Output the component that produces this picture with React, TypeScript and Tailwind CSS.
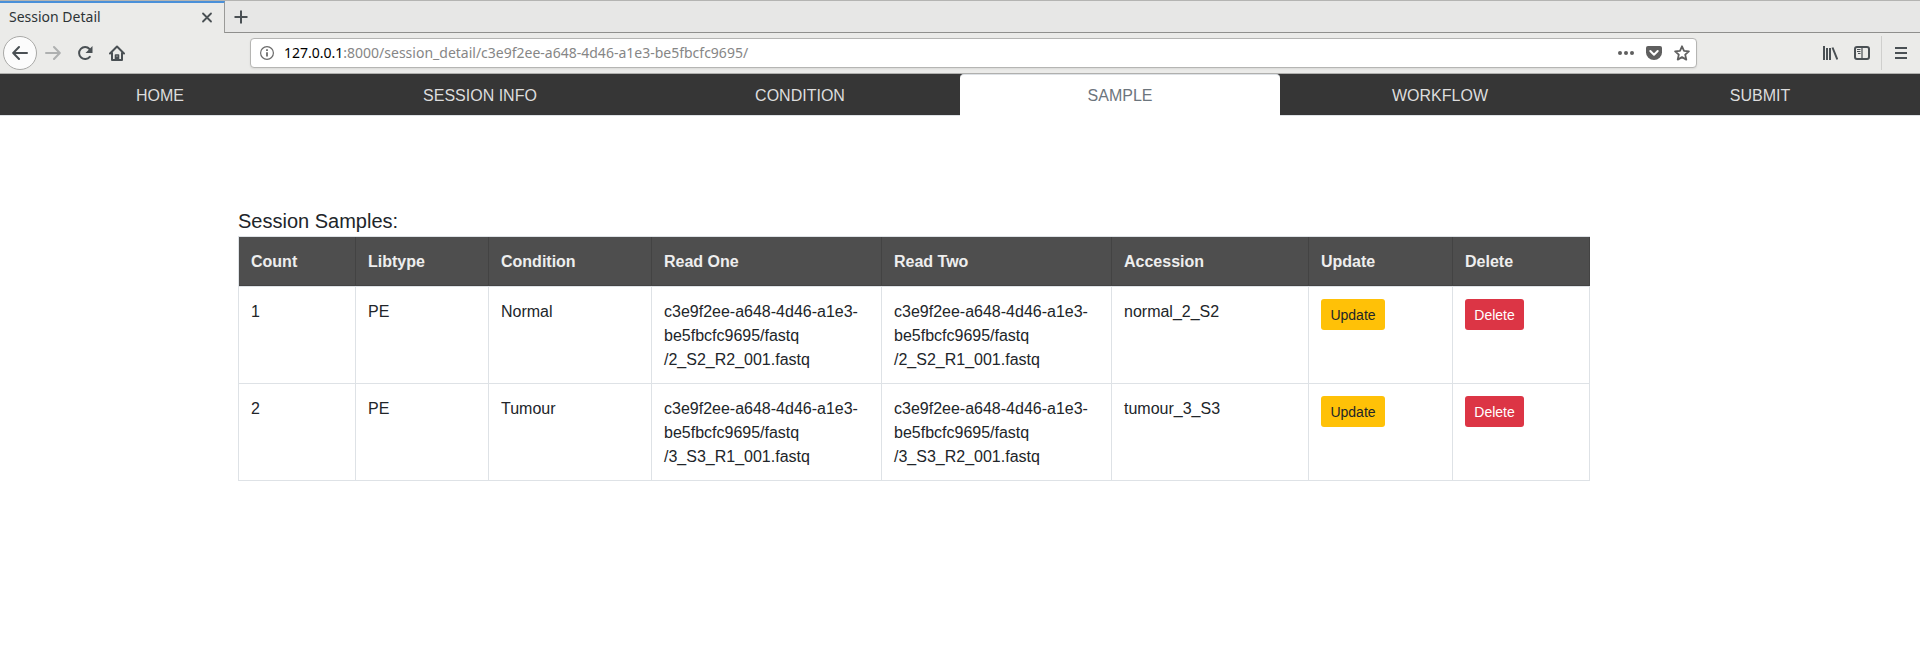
import type { ReactNode } from "react";

const navItems = ["HOME", "SESSION INFO", "CONDITION", "SAMPLE", "WORKFLOW", "SUBMIT"];
const activeItem = "SAMPLE";

const columns = [
  { label: "Count", width: "w-[117px]" },
  { label: "Libtype", width: "w-[133px]" },
  { label: "Condition", width: "w-[163px]" },
  { label: "Read One", width: "w-[230px]" },
  { label: "Read Two", width: "w-[230px]" },
  { label: "Accession", width: "w-[197px]" },
  { label: "Update", width: "w-[144px]" },
  { label: "Delete", width: "w-[137px]" },
];

const folder = ["c3e9f2ee-a648-4d46-a1e3-", "be5fbcfc9695/fastq"];

const samples = [
  { count: 1, libtype: "PE", condition: "Normal", readOne: "/2_S2_R2_001.fastq", readTwo: "/2_S2_R1_001.fastq", accession: "normal_2_S2" },
  { count: 2, libtype: "PE", condition: "Tumour", readOne: "/3_S3_R1_001.fastq", readTwo: "/3_S3_R2_001.fastq", accession: "tumour_3_S3" },
];

function ToolButton({ label, children }: { label: string; children: ReactNode }) {
  return (
    <button type="button" aria-label={label} className="flex h-8 w-8 shrink-0 items-center justify-center">
      {children}
    </button>
  );
}

function Icon({ children, className = "text-[#4a5054]" }: { children: ReactNode; className?: string }) {
  return (
    <svg
      viewBox="0 0 16 16"
      width="16"
      height="16"
      fill="none"
      stroke="currentColor"
      strokeWidth="2"
      strokeLinecap="round"
      strokeLinejoin="round"
      className={className}
      aria-hidden="true"
    >
      {children}
    </svg>
  );
}

function TabStrip() {
  return (
    <div className="flex h-[33px] border-t border-[#b4b4b2]">
      <div className="flex w-[225px] items-center justify-between border-t-2 border-r border-t-[#4a90d9] border-r-[#9a9a98] pr-[9px] pb-[3px] pl-[9px]">
        <span className="text-sm leading-5 text-[#2e3436]">Session Detail</span>
        <button type="button" aria-label="Close tab" className="flex h-4 w-4 items-center justify-center">
          <Icon>
            <path d="M4 4.500l8 8M12 4.500l-8 8" strokeWidth="1.800" />
          </Icon>
        </button>
      </div>
      <div className="flex flex-1 items-center border-b border-[#8f8f8d] bg-[#e7e7e6]">
        <button type="button" aria-label="New tab" className="flex h-8 w-8 items-center justify-center">
          <Icon>
            <path d="M8 1.500v13M1.500 8h13" strokeLinecap="butt" />
          </Icon>
        </button>
      </div>
    </div>
  );
}

function Toolbar() {
  return (
    <div className="flex h-[41px] items-center border-b border-[#b0b0ae] px-[3px]">
      <button
        type="button"
        aria-label="Back"
        className="flex h-[34px] w-[34px] shrink-0 items-center justify-center rounded-full border border-[#a9a9a7] bg-[#fcfcfc]"
      >
        <Icon>
          <path d="M15 8H1.5M7 2L1.2 8L7 14" />
        </Icon>
      </button>
      <ToolButton label="Forward">
        <Icon className="text-[#aeb0b0]">
          <path d="M1 8h13.500M9 2l5.800 6L9 14" />
        </Icon>
      </ToolButton>
      <ToolButton label="Reload">
        <Icon>
          <path d="M12.800 11.800A6 6 0 1 1 12.500 4" />
          <path d="M15.500 1v7H8.500z" fill="currentColor" stroke="none" />
        </Icon>
      </ToolButton>
      <ToolButton label="Home">
        <Icon>
          <path d="M1 8.500L8 1.500l7 7" />
          <path d="M3 8v7h10V8" />
          <path d="M6.500 15v-5h3v5M8 12v3" strokeWidth="1.600" />
        </Icon>
      </ToolButton>
      <div className="mx-[117px] flex h-[30px] min-w-0 flex-1 items-center rounded-[4px] border border-[#b5b5b3] bg-white pr-[6px] pl-[9px] text-sm leading-5 shadow-[0_1px_2px_#00000014]">
        <svg viewBox="0 0 14 14" width="14" height="14" fill="none" stroke="#6b6b6b" className="mr-[10px] shrink-0" aria-hidden="true">
          <circle cx="7" cy="7" r="6.400" strokeWidth="1.200" />
          <path d="M7 6.300v4.200M7 3.300v1.700" strokeWidth="1.800" />
        </svg>
        <label htmlFor="address" className="text-black">127.0.0.1</label>
        <input
          id="address"
          type="text"
          readOnly
          value=":8000/session_detail/c3e9f2ee-a648-4d46-a1e3-be5fbcfc9695/"
          className="min-w-0 flex-1 bg-transparent text-[#868686] outline-none"
        />
        <div className="flex items-center gap-3">
          <button type="button" aria-label="Page actions">
            <Icon className="text-[#5f5f5f]">
              <g fill="currentColor" stroke="none">
                <circle cx="2" cy="8" r="2" />
                <circle cx="8" cy="8" r="2" />
                <circle cx="14" cy="8" r="2" />
              </g>
            </Icon>
          </button>
          <button type="button" aria-label="Save to Pocket">
            <Icon className="text-[#5f5f5f]">
              <path d="M2 1h12a2 2 0 0 1 2 2v4.500a8 7.500 0 0 1-16 0V3a2 2 0 0 1 2-2z" fill="currentColor" stroke="none" />
              <path d="M4.300 6l3.700 3.700L11.700 6" stroke="#fff" />
            </Icon>
          </button>
          <button type="button" aria-label="Bookmark this page">
            <Icon className="text-[#5f5f5f]">
              <path d="M8 1.300l2 4.500 4.900.5-3.700 3.300 1.100 5L8 12.100l-4.300 2.500 1.100-5L1.100 6.300 6 5.800z" strokeWidth="1.800" />
            </Icon>
          </button>
        </div>
      </div>
      <ToolButton label="Library">
        <Icon>
          <path d="M2 1v14M5 3v12M8 3v12M10.500 2.500L15.300 14.500" strokeLinecap="butt" />
        </Icon>
      </ToolButton>
      <ToolButton label="Sidebars">
        <Icon>
          <rect x="1" y="2" width="14" height="12" rx="2" />
          <path d="M8 2v12" strokeWidth="1.200" />
          <path d="M3 4.500h3.500M3 6.500h3.500M4 8.500h2.500" strokeWidth="1" strokeLinecap="butt" />
        </Icon>
      </ToolButton>
      <div className="mx-[3px] h-[34px] w-px bg-[#cfcfcd]" />
      <ToolButton label="Open menu">
        <Icon>
          <path d="M2 3h12M2 8h12M2 13h12" strokeLinecap="butt" />
        </Icon>
      </ToolButton>
    </div>
  );
}

function SiteNav() {
  return (
    <nav className="flex border-b border-[#dee2e6] bg-[#363636] text-center text-base">
      {navItems.map((item) => (
        <a
          key={item}
          href="#"
          className={
            item === activeItem
              ? "-mb-px flex-1 rounded-t border-t border-[#dee2e6] bg-white pt-[9px] pb-2 text-[#6c757d]"
              : "flex-1 border-t border-transparent pt-[9px] pb-[7px] text-[#dddddd]"
          }
        >
          {item}
        </a>
      ))}
    </nav>
  );
}

function FilePath({ file }: { file: string }) {
  return (
    <>
      {folder[0]}
      <br />
      {folder[1]}
      <br />
      {file}
    </>
  );
}

const cellBorder = "border-t border-r border-[#dee2e6] align-top";
const textCell = `${cellBorder} px-3 pt-[13px] pb-[11px]`;
const buttonCell = `${cellBorder} p-3`;
const smallButton = "block rounded-[3px] pt-[6px] pb-1 text-center text-sm leading-[21px]";

function SamplesTable() {
  return (
    <table className="w-full table-fixed border-separate border-spacing-0 border-t border-b border-l border-[#dee2e6] text-base">
      <thead>
        <tr>
          {columns.map(({ label, width }) => (
            <th
              key={label}
              scope="col"
              className={`${width} border-r border-b border-[#434343] bg-[#4e4e4e] px-3 pt-[13px] pb-[11px] text-left font-bold text-[#eeeeee]`}
            >
              {label}
            </th>
          ))}
        </tr>
      </thead>
      <tbody>
        {samples.map((sample) => (
          <tr key={sample.count}>
            <td className={textCell}>{sample.count}</td>
            <td className={textCell}>{sample.libtype}</td>
            <td className={textCell}>{sample.condition}</td>
            <td className={textCell}><FilePath file={sample.readOne} /></td>
            <td className={textCell}><FilePath file={sample.readTwo} /></td>
            <td className={textCell}>{sample.accession}</td>
            <td className={buttonCell}>
              <button type="button" className={`${smallButton} w-16 bg-[#ffc107] text-[#212529]`}>Update</button>
            </td>
            <td className={buttonCell}>
              <button type="button" className={`${smallButton} w-[59px] bg-[#dc3545] text-white`}>Delete</button>
            </td>
          </tr>
        ))}
      </tbody>
    </table>
  );
}

export default function App() {
  return (
    <div className="min-h-screen bg-white font-['Liberation_Sans',Arial,sans-serif] text-[#212529]">
      <header className="bg-[#ebebe9] font-['Noto_Sans',sans-serif]">
        <TabStrip />
        <Toolbar />
      </header>
      <SiteNav />
      <main className="ml-[238px] max-w-[1352px] pt-[90px]">
        <h1 className="text-xl leading-[30px]">Session Samples:</h1>
        <SamplesTable />
      </main>
    </div>
  );
}
